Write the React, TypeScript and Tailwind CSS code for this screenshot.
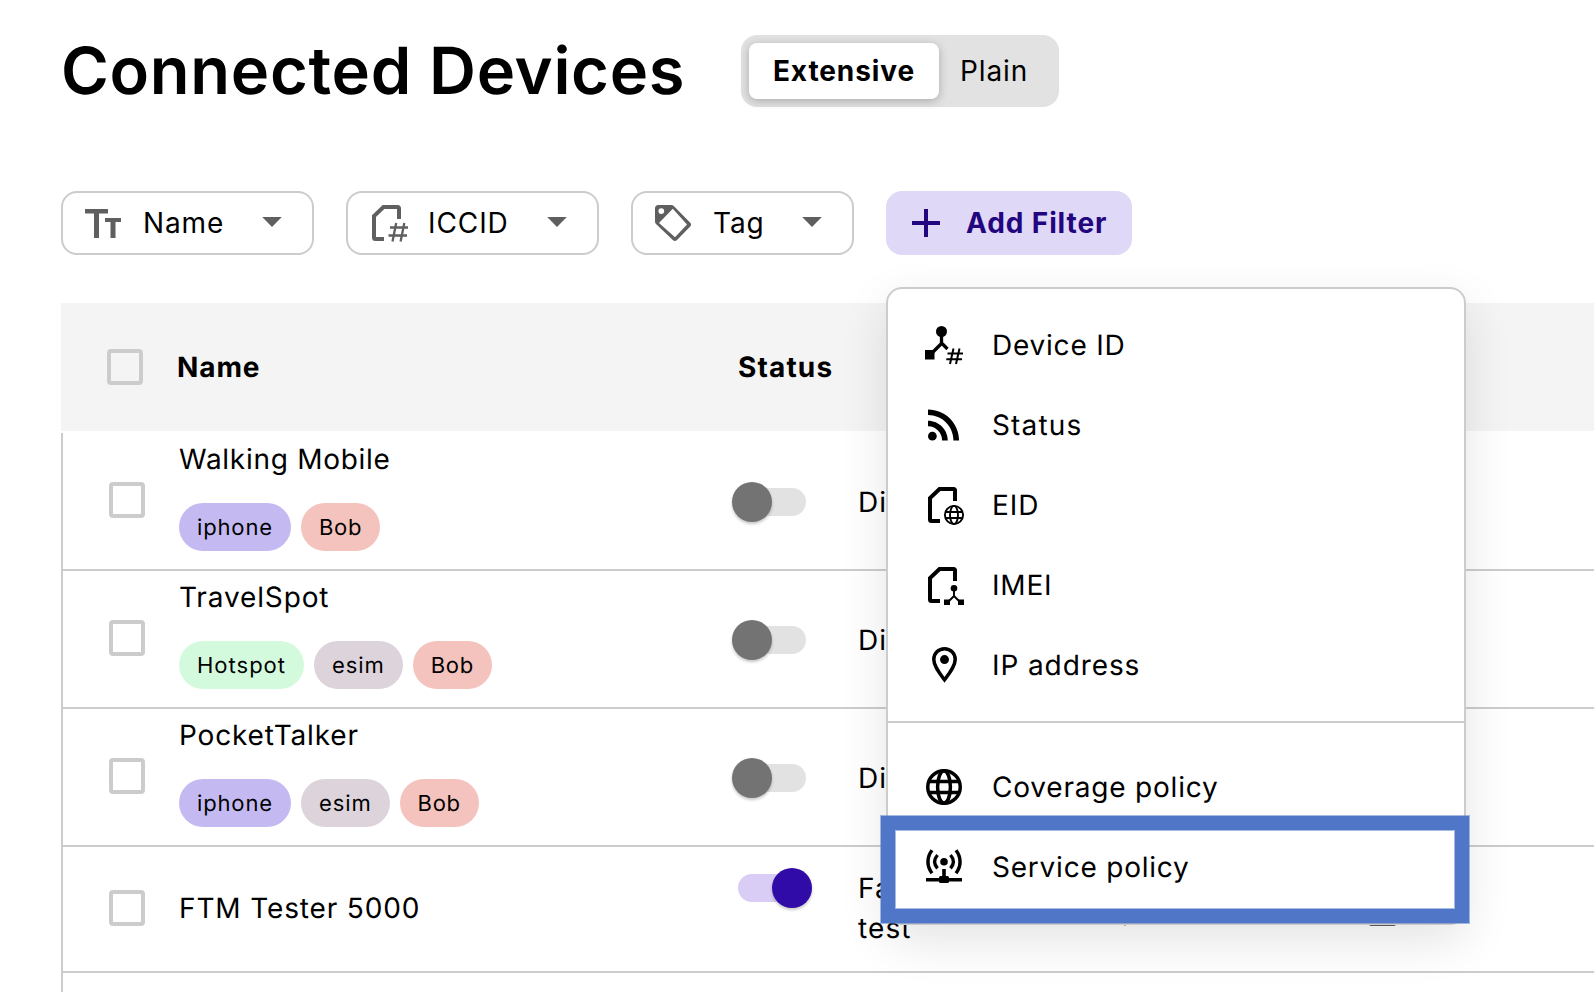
import type { ReactNode } from "react";

type Tag = { label: string; tone: string };
type Device = {
  name: string;
  tracking: string;
  tags: Tag[];
  active: boolean;
  status: string[];
  actions?: boolean;
};

const IPHONE: Tag = { label: "iphone", tone: "bg-[#c4baf1] tracking-[0.85px]" };
const BOB: Tag = { label: "Bob", tone: "bg-[#f5c3bd] tracking-[0.7px]" };
const ESIM: Tag = { label: "esim", tone: "bg-[#dcd3db] tracking-[0.9px]" };
const HOTSPOT: Tag = { label: "Hotspot", tone: "bg-[#d4fadd] tracking-[1px]" };

const devices: Device[] = [
  { name: "Walking Mobile", tracking: "tracking-[0.72px]", tags: [IPHONE, BOB], active: false, status: ["Di"] },
  { name: "TravelSpot", tracking: "tracking-[0.87px]", tags: [HOTSPOT, ESIM, BOB], active: false, status: ["Di"] },
  { name: "PocketTalker", tracking: "tracking-[0.82px]", tags: [IPHONE, ESIM, BOB], active: false, status: ["Di"] },
  {
    name: "FTM Tester 5000",
    tracking: "tracking-[0.86px]",
    tags: [],
    active: true,
    status: ["Fa", "test"],
    actions: true,
  },
];

function Icon({ children }: { children: ReactNode }) {
  return (
    <svg className="size-12 shrink-0" viewBox="0 0 48 48" fill="none" stroke="currentColor">
      {children}
    </svg>
  );
}

const SimOutline = () => (
  <path d="M20 40H11.5a1.5 1.5 0 0 1-1.5-1.5V17L19.5 8H33.5a1.5 1.5 0 0 1 1.5 1.5V20" strokeWidth="4" />
);

const TextIcon = () => (
  <Icon>
    <path d="M6 10h23v4.500h-9V39h-5V14.500H6zM26 19h16v4h-5.500V39h-5V23H26z" fill="currentColor" stroke="none" />
  </Icon>
);
const IccidIcon = () => (
  <Icon>
    <SimOutline />
    <path d="M26 28.500H44M24.500 36.500H43M32.200 24L28.500 42.500M40.300 24L36.600 42.500" strokeWidth="2.300" />
  </Icon>
);
const TagIcon = () => (
  <Icon>
    <path
      d="M9.500 6H22.500a3 3 0 0 1 2 .8L41 23.600a3 3 0 0 1 0 4.200L28 41a3 3 0 0 1-4.200 0L7 25a3 3 0 0 1-1-2V9.500A3.500 3.500 0 0 1 9.500 6zM23.800 9.700L10 24 26 38.200 38 25.500zM12.300 9.200a2.900 2.900 0 1 0 0 5.800 2.900 2.900 0 0 0 0-5.800z"
      fill="currentColor"
      fillRule="evenodd"
      stroke="none"
    />
  </Icon>
);
const CaretIcon = () => (
  <Icon>
    <path d="M14.200 18h19.600L24 28z" fill="currentColor" stroke="none" />
  </Icon>
);
const PlusIcon = () => (
  <Icon>
    <path d="M24 10v28M10 24h28" strokeWidth="4" />
  </Icon>
);
const DeviceIdIcon = () => (
  <Icon>
    <circle cx="21.500" cy="10.500" r="5.500" fill="currentColor" stroke="none" />
    <path d="M5 29h9.500v9.500H5z" fill="currentColor" stroke="none" />
    <path d="M21.500 14v8.500L11 33M21.500 22l6 6" strokeWidth="3.300" />
    <path d="M27.500 32.500H43M26.300 38.300H42M33.500 27.500L30 43M39.500 27.500L36 43" strokeWidth="2" />
  </Icon>
);
const RssIcon = () => (
  <Icon>
    <circle cx="12.360" cy="35.140" r="4.360" fill="currentColor" stroke="none" />
    <path
      d="M8 8.380v5.660c14.060 0 25.460 11.400 25.460 25.460h5.660C39.120 22.320 25.180 8.380 8 8.380zm0 11.320v5.660c7.800 0 14.140 6.340 14.140 14.140h5.660c0-10.940-8.860-19.800-19.800-19.800z"
      fill="currentColor"
      stroke="none"
    />
  </Icon>
);
const EidIcon = () => (
  <Icon>
    <SimOutline />
    <g strokeWidth="1.900">
      <circle cx="34" cy="34" r="9.100" />
      <ellipse cx="34" cy="34" rx="4" ry="9.100" />
      <path d="M25.500 31h17M25.500 37h17" />
    </g>
  </Icon>
);
const ImeiIcon = () => (
  <Icon>
    <SimOutline />
    <g fill="currentColor" stroke="none">
      <circle cx="34" cy="27.300" r="3.300" />
      <path d="M24 38.500h6V44h-6zM38 38.500h6V44h-6z" />
    </g>
    <path d="M34 29v6l-6 6M34 35l6 6" strokeWidth="1.900" />
  </Icon>
);
const PinIcon = () => (
  <Icon>
    <path d="M24.500 7.800c-6 0-10.700 4.600-10.700 10.600 0 6.600 5.500 13.400 10.700 20.400 5.200-7 10.700-13.800 10.700-20.400 0-6-4.700-10.600-10.700-10.600z" strokeWidth="3.500" />
    <circle cx="24.500" cy="18.600" r="4.500" fill="currentColor" stroke="none" />
  </Icon>
);
const GlobeIcon = () => (
  <Icon>
    <g strokeWidth="3.500">
      <circle cx="24" cy="24" r="16.250" />
      <ellipse cx="24" cy="24" rx="6.400" ry="16.250" />
      <path d="M9 18.500h30M9 29.500h30" />
    </g>
  </Icon>
);
const ServiceIcon = () => (
  <Icon>
    <circle cx="24" cy="18.700" r="3.800" fill="currentColor" stroke="none" />
    <path d="M12 7.200c-5.400 7-5.400 16 0 23M36 7.200c5.400 7 5.400 16 0 23" strokeWidth="3.500" />
    <path d="M17.500 12c-3.600 4.200-3.600 9.200 0 13.400M30.500 12c3.600 4.200 3.600 9.200 0 13.400" strokeWidth="3.300" />
    <path d="M24 26v8M6 36.800h36" strokeWidth="3.600" />
    <rect x="19" y="33" width="10" height="7" rx="1.500" fill="currentColor" stroke="none" />
  </Icon>
);

function Checkbox() {
  return <span className="size-9 shrink-0 rounded-[4px] border-4 border-[#cccccc]" />;
}

function FilterButton({ icon, label, width }: { icon: ReactNode; label: string; width: string }) {
  return (
    <button className={`flex h-16 items-center rounded-2xl border-2 border-[#cccccc] bg-white px-4 ${width}`}>
      <span className="mr-4 text-[#5f5f5f]">{icon}</span>
      <span className="flex-1 text-left">{label}</span>
      <span className="text-[#5f5f5f]">
        <CaretIcon />
      </span>
    </button>
  );
}

function Switch({ on }: { on: boolean }) {
  return (
    <span className={`flex h-10 w-20 items-center ${on ? "justify-end" : "justify-start"}`}>
      {on && <span className="-mr-[34px] h-7 w-[68px] shrink-0 rounded-full bg-[#d9cdf5]" />}
      <span
        className={`relative z-10 size-10 shrink-0 rounded-full shadow-[0_2px_3px_rgba(0,0,0,0.22)] ${on ? "bg-[#300ba8]" : "bg-[#737373]"}`}
      />
      {!on && <span className="-ml-[34px] h-7 w-[68px] shrink-0 rounded-full bg-[#e2e2e2]" />}
    </span>
  );
}

type MenuItemProps = { icon: ReactNode; label: string; tracking: string; highlighted?: boolean };

function MenuItem({ icon, label, tracking, highlighted }: MenuItemProps) {
  return (
    <li className="relative flex h-20 items-center gap-6 pl-8">
      {icon}
      <span className={tracking}>{label}</span>
      {highlighted && (
        <span className="absolute -top-3 -left-2 h-[109px] w-[590px] border border-[#4f76c7]/50">
          <span className="block h-full border-[14px] border-[#4f76c7]">
            <span className="block h-full border border-[#4f76c7]/50" />
          </span>
        </span>
      )}
    </li>
  );
}

function AddFilterMenu() {
  return (
    <div className="absolute top-24 left-0 z-20 w-[580px] rounded-2xl border-2 border-[#cccccc] bg-white py-4 shadow-[0_16px_48px_rgba(0,0,0,0.11)]">
      <ul>
        <MenuItem icon={<DeviceIdIcon />} label="Device ID" tracking="tracking-[0.78px]" />
        <MenuItem icon={<RssIcon />} label="Status" tracking="tracking-[1.15px]" />
        <MenuItem icon={<EidIcon />} label="EID" tracking="tracking-[0.9px]" />
        <MenuItem icon={<ImeiIcon />} label="IMEI" tracking="tracking-[0.8px]" />
        <MenuItem icon={<PinIcon />} label="IP address" tracking="tracking-[0.9px]" />
      </ul>
      <hr className="mt-4 mb-6 border-t-2 border-[#cccccc]" />
      <ul>
        <MenuItem icon={<GlobeIcon />} label="Coverage policy" tracking="tracking-[0.8px]" />
        <MenuItem icon={<ServiceIcon />} label="Service policy" tracking="tracking-[0.78px]" highlighted />
      </ul>
    </div>
  );
}

function DeviceRow({ device }: { device: Device }) {
  const tagged = device.tags.length > 0;
  return (
    <div className={`flex items-center border-b-2 border-[#cccccc] ${tagged ? "h-[138px]" : "h-[126px]"}`}>
      <div className="flex w-[116px] pb-0.5 pl-[46px]">
        <Checkbox />
      </div>
      <div className={`w-[553px] ${tagged ? "pb-3" : "pb-0.5"}`}>
        <div className={`leading-10 ${device.tracking}`}>{device.name}</div>
        {tagged && (
          <div className="mt-6 flex gap-[10px]">
            {device.tags.map((tag) => (
              <span
                key={tag.label}
                className={`flex h-12 items-center rounded-full px-[18px] pt-0.5 text-[22px] ${tag.tone}`}
              >
                {tag.label}
              </span>
            ))}
          </div>
        )}
      </div>
      <div className={`flex items-start ${tagged ? "pt-0.5" : "pb-0.5"}`}>
        <Switch on={device.active} />
        <div className="ml-[46px] w-[254px] leading-10 tracking-[1.1px]">
          {device.status.map((line) => (
            <div key={line}>{line}</div>
          ))}
        </div>
      </div>
      {device.actions && (
        <div className="flex">
          <svg className="h-[34px] w-[26px] text-[#d83a3a]" viewBox="0 0 26 34" fill="currentColor">
            <path d="M13 0a12 12 0 0 0-12 12c0 9 12 22 12 22s12-13 12-22A12 12 0 0 0 13 0z" />
          </svg>
          <svg className="ml-[231px] h-[34px] w-[27px] text-[#5f5f5f]" viewBox="0 0 27 34" fill="currentColor">
            <path d="M0 8h27v24a2 2 0 0 1-2 2H2a2 2 0 0 1-2-2zM9 0h9v4h9v3H0V4h9z" />
          </svg>
        </div>
      )}
    </div>
  );
}

export default function App() {
  return (
    <main className="h-[992px] w-full overflow-hidden bg-white pt-[35px] pl-[61px] font-['Inter',sans-serif] text-[28px] tracking-[0.9px] text-black [text-rendering:geometricPrecision]">
      <header className="flex h-[72px] items-center">
        <h1 className="w-[680px] text-[65px] leading-[72px] font-semibold tracking-[0.7px] whitespace-nowrap">
          Connected Devices
        </h1>
        <div className="flex h-[72px] w-[318px] items-center rounded-2xl bg-[#e2e2e2] pl-2">
          <button className="h-14 w-[190px] rounded-lg bg-white font-bold shadow-[0_2px_10px_rgba(0,0,0,0.25)]">
            Extensive
          </button>
          <button className="ml-[21px]">Plain</button>
        </div>
      </header>

      <div className="mt-[84px] flex gap-8">
        <FilterButton icon={<TextIcon />} label="Name" width="w-[253px]" />
        <FilterButton icon={<IccidIcon />} label="ICCID" width="w-[253px]" />
        <FilterButton icon={<TagIcon />} label="Tag" width="w-[223px]" />
        <div className="relative">
          <button className="flex h-16 w-[246px] items-center gap-4 rounded-2xl bg-[#dfd8f6] pl-4 font-bold whitespace-nowrap text-[#23057f]">
            <PlusIcon />
            Add Filter
          </button>
          <AddFilterMenu />
        </div>
      </div>

      <section className="mt-12">
        <div className="flex h-32 items-center bg-[#f4f4f4] font-bold">
          <div className="flex w-[116px] pl-[46px]">
            <Checkbox />
          </div>
          <div className="w-[561px]">Name</div>
          <div className="tracking-[1.15px]">Status</div>
        </div>
        <div className="mt-0.5 h-[600px] border-l-2 border-[#cccccc]">
          {devices.map((device) => (
            <DeviceRow key={device.name} device={device} />
          ))}
        </div>
      </section>
    </main>
  );
}
